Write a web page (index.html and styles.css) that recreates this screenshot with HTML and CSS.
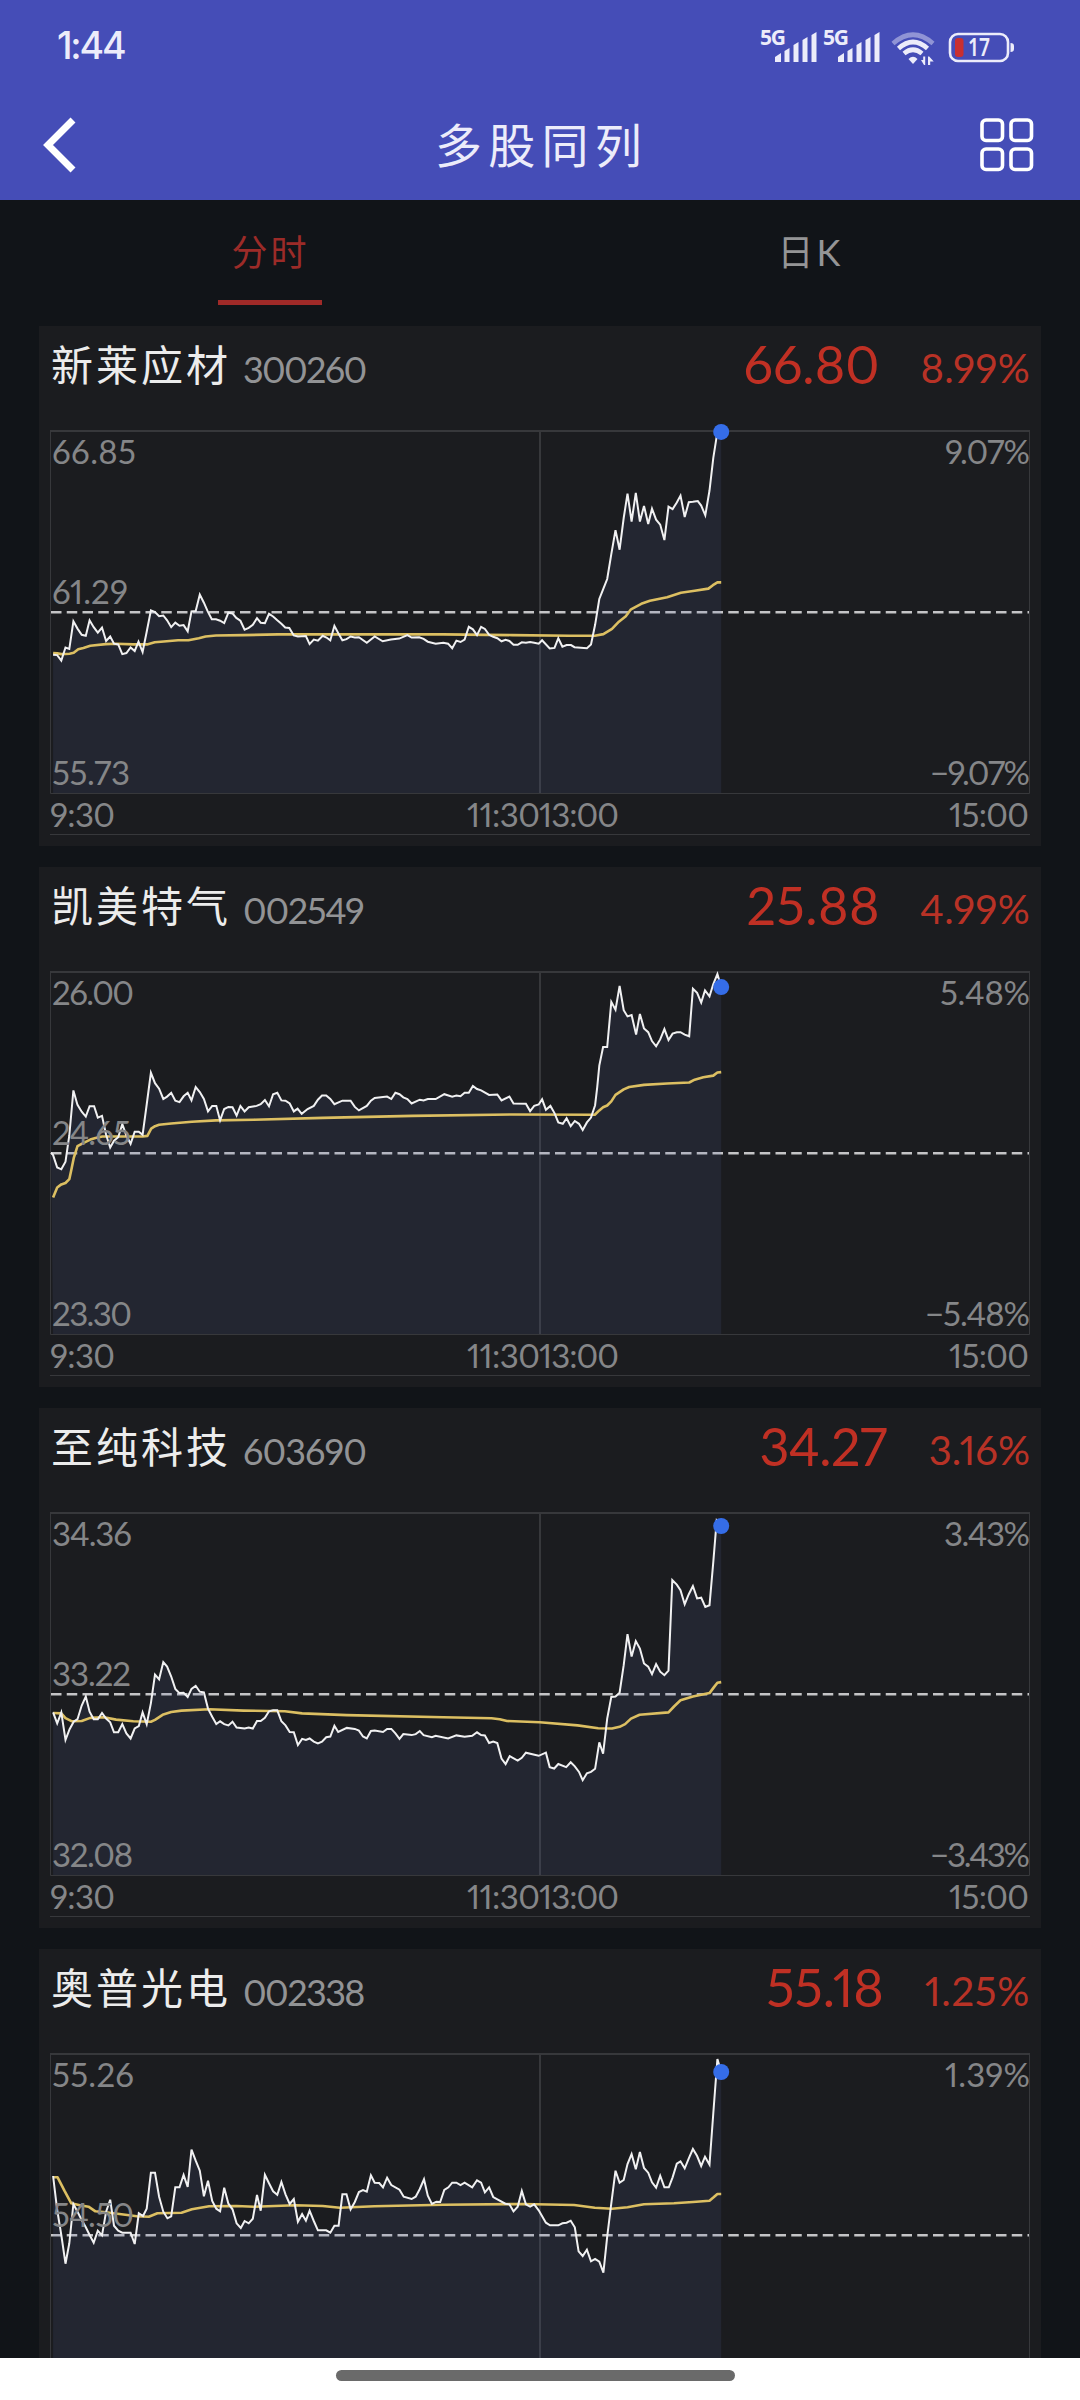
FILE: index.html
```html
<!DOCTYPE html>
<html lang="zh-CN">
<head>
<meta charset="utf-8">
<title>多股同列</title>
<link rel="stylesheet" href="styles.css">
</head>
<body>
<div class="screen">
  <header class="top">
    <div class="status">
      <span class="clock">1:44</span>
      <svg class="status-icons" width="260" height="40" viewBox="0 0 260 40">
        <g id="signal">
          <text class="net" x="0" y="20" textLength="26">5G</text>
          <path d="M15 32l6-4v9h-6zM24.500 26l5-3v14h-5zM33.500 20l5-3v20h-5zM42.500 15l5-3v25h-5zM51.500 10l5-3v30h-5z"/>
        </g>
        <use href="#signal" x="63"/>
        <g fill="none" stroke="#ececfa" stroke-width="4.600">
          <path d="M133 18.500Q153 1 173 18.500" opacity=".45"/>
          <path d="M138.500 23.500Q153 10.500 167.500 23.500"/>
          <path d="M144 28.500Q153 21 162 28.500"/>
        </g>
        <path d="M148.500 34Q153 29.500 157.500 34L153 39z"/>
        <path d="M161 35h2.200v-3.500h2v8.500h-1.200zM168 40v-8.500h1.200l4.500 5h-3.500v3.500z"/>
        <rect x="190" y="9" width="58" height="27" rx="8" fill="none" stroke="#ececfa" stroke-width="2.600"/>
        <rect x="195" y="13" width="8.500" height="19" rx="3" fill="#c92f30"/>
        <path d="M250.500 18q3.500 0 3.500 3v3q0 3-3.500 3z"/>
        <text class="level" x="208" y="31" textLength="22" lengthAdjust="spacingAndGlyphs">17</text>
      </svg>
    </div>
    <div class="nav">
      <svg class="back" width="34" height="56" viewBox="0 0 34 56"><path d="M30 3L5 28L30 53" fill="none" stroke="#fff" stroke-width="7"/></svg>
      <h1>多股同列</h1>
      <svg class="grid" width="54" height="54" viewBox="0 0 54 54" fill="none" stroke="#fff" stroke-width="3.600">
        <rect x="2" y="2" width="20.500" height="20.500" rx="4"/><rect x="31" y="2" width="20.500" height="20.500" rx="4"/>
        <rect x="2" y="31" width="20.500" height="20.500" rx="4"/><rect x="31" y="31" width="20.500" height="20.500" rx="4"/>
      </svg>
    </div>
  </header>
  <nav class="tabs">
    <div class="tab active"><span>分时</span></div>
    <div class="tab"><span>日K</span></div>
  </nav>
  <main class="list">
    <section class="card q1">
      <div class="head"><span class="name">新莱应材</span><span class="code">300260</span><span class="price">66.80</span><span class="change">8.99%</span></div>
      <svg class="plot" width="980" height="406" data-series="0">
        <g class="labels"><text x="2" y="34" textLength="84">66.85</text><text x="2" y="173.500" textLength="76">61.29</text><text x="2" y="354.500" textLength="78">55.73</text>
        <text x="895" y="34" textLength="85">9.07%</text><text x="880" y="354.500" textLength="100">−9.07%</text>
        <text x="0" y="396.500" textLength="65">9:30</text><text x="417" y="396.500" textLength="73">11:30</text><text x="489" y="396.500" textLength="80">13:00</text><text x="899" y="396.500" textLength="80">15:00</text></g>
      </svg>
    </section>
    <section class="card q2">
      <div class="head"><span class="name">凯美特气</span><span class="code">002549</span><span class="price">25.88</span><span class="change">4.99%</span></div>
      <svg class="plot" width="980" height="406" data-series="1">
        <g class="labels"><text x="2" y="34" textLength="82">26.00</text><text x="2" y="173.500" textLength="79">24.65</text><text x="2" y="354.500" textLength="80">23.30</text>
        <text x="890" y="34" textLength="90">5.48%</text><text x="875" y="354.500" textLength="105">−5.48%</text>
        <text x="0" y="396.500" textLength="65">9:30</text><text x="417" y="396.500" textLength="73">11:30</text><text x="489" y="396.500" textLength="80">13:00</text><text x="899" y="396.500" textLength="80">15:00</text></g>
      </svg>
    </section>
    <section class="card q3">
      <div class="head"><span class="name">至纯科技</span><span class="code">603690</span><span class="price">34.27</span><span class="change">3.16%</span></div>
      <svg class="plot" width="980" height="406" data-series="2">
        <g class="labels"><text x="2" y="34" textLength="80">34.36</text><text x="2" y="173.500" textLength="79">33.22</text><text x="2" y="354.500" textLength="81">32.08</text>
        <text x="894" y="34" textLength="86">3.43%</text><text x="880" y="354.500" textLength="100">−3.43%</text>
        <text x="0" y="396.500" textLength="65">9:30</text><text x="417" y="396.500" textLength="73">11:30</text><text x="489" y="396.500" textLength="80">13:00</text><text x="899" y="396.500" textLength="80">15:00</text></g>
      </svg>
    </section>
    <section class="card q4">
      <div class="head"><span class="name">奥普光电</span><span class="code">002338</span><span class="price">55.18</span><span class="change">1.25%</span></div>
      <svg class="plot" width="980" height="406" data-series="3">
        <g class="labels"><text x="2" y="34" textLength="82">55.26</text><text x="2" y="173.500" textLength="82">54.50</text>
        <text x="895" y="34" textLength="85">1.39%</text></g>
      </svg>
    </section>
  </main>
  <footer class="gesture"><div class="handle"></div></footer>
</div>
<script src="charts.js"></script>
</body>
</html>
```
FILE: styles.css
```css
* { box-sizing: border-box; }
body { margin: 0; background: #111418; }
.screen {
  width: 1080px; height: 2400px; overflow: hidden;
  display: flex; flex-direction: column;
  background: #111418; color: #ececec;
  font-family: Lato, "Noto Sans CJK SC", sans-serif;
  font-variant-numeric: proportional-nums;
}
.top { height: 200px; flex: none; background: #454db7; color: #ececfa; }
.status { height: 90px; padding: 0 60px 0 57px; display: flex; justify-content: space-between; align-items: center; }
.clock { padding-top: 1px; font: 500 37.5px/44px Inter, sans-serif; letter-spacing: -2.2px; }
.status-icons { fill: #ececfa; overflow: visible; }
.net { font: 700 21px "Noto Sans", sans-serif; }
.level { font: 600 25px "Noto Sans", sans-serif; }
.nav { height: 110px; padding: 0 46px 0 43px; display: flex; justify-content: space-between; align-items: center; }
.nav svg { margin-bottom: 1px; }
.back { margin-right: 20px; }
h1 { margin: 0; padding-bottom: 5px; font: 400 47px/64px "Noto Sans CJK SC", sans-serif; letter-spacing: 6.3px; text-indent: 6px; }
.tabs { height: 126px; flex: none; display: flex; }
.tab { flex: 1; display: flex; justify-content: center; font-size: 36px; line-height: 104px; color: #949596; letter-spacing: 3px; }
.tab span { width: 104px; height: 105px; padding-left: 1px; text-align: center; }
.tab.active { color: #9c2b28; }
.tab.active span { border-bottom: 5px solid #a02a28; }
.list { flex: 1; min-height: 0; overflow: hidden; padding: 0 39px; display: flex; flex-direction: column; gap: 21px; }
.card { height: 520px; flex: none; padding: 0 11px; background: #1b1c1f; }
.head { height: 104px; padding-top: 5px; display: flex; align-items: baseline; line-height: 60px; }
.name { font-family: "Noto Sans CJK SC", sans-serif; font-size: 42px; letter-spacing: 3px; padding-left: 1px; }
.code { margin-left: 12px; padding-top: 2px; font-size: 36px; color: #929395; transform: translateY(2px); }
.price { margin-left: auto; font-size: 52px; color: #c03024; transform: translateY(3px); }
.change { font-size: 40px; color: #b83226; transform: translateY(2px); }
.q1 .code { letter-spacing: -1.7px; }
.q2 .code { letter-spacing: -1.3px; }
.q3 .code { letter-spacing: -.9px; }
.q4 .code { letter-spacing: -1.6px; }
.q1 .price { letter-spacing: 0; margin-right: 41px; }
.q2 .price { letter-spacing: .5px; margin-right: 40px; }
.q3 .price { letter-spacing: -.6px; margin-right: 42px; }
.q4 .price { letter-spacing: 0; margin-right: 41px; }
.q1 .change, .q2 .change { letter-spacing: .3px; }
.q4 .change { letter-spacing: .7px; }
.plot { display: block; overflow: visible; }
.labels { font-size: 33px; fill: #858688; }
.frame { fill: none; stroke: #37383b; stroke-width: 1; }
.frame.strong { stroke-width: 2; }
.base { stroke: #c4c4c6; stroke-width: 2.6; stroke-dasharray: 10.5 5.25; }
.area { fill: rgba(82, 100, 165, .14); }
.price-line { fill: none; stroke: #f1f1f2; stroke-width: 2; stroke-linejoin: miter; }
.avg-line { fill: none; stroke: #dcbf62; stroke-width: 2.6; stroke-linejoin: round; }
.dot { fill: #356de8; }
.gesture { height: 42px; flex: none; background: #fff; display: flex; justify-content: center; padding-top: 12px; }
.handle { width: 399px; height: 11px; margin-right: 9px; border-radius: 6px; background: #6a6a6a; }
```
FILE: charts.js
```js
// Intraday series: "x,y" pairs on a grid finer than a pixel; kx and ky give grid units per pixel.
const series = [
  { dy: -110, ky: 2.9037,
    price: "67,972 79,973 91,989 103,951 114,955 126,875 138,896 150,914 162,917 173,872 185,892 197,908 209,893 221,932 233,919 244,940 256,942 268,970 280,967 292,951 304,961 315,934 327,964 339,905 351,843 363,848 375,860 387,858 398,872 410,892 422,879 434,888 446,886 458,904 469,846 481,845 493,797 505,821 516,846 528,869 540,869 552,873 564,880 576,850 588,852 599,865 611,873 623,899 635,894 647,885 659,866 670,879 682,880 694,853 706,861 718,872 730,882 741,893 753,894 766,916 778,919 801,918 812,941 824,928 836,931 850,917 861,922 872,930 884,888 896,911 907,930 919,927 931,919 943,922 955,921 978,937 1001,919 1024,933 1048,928 1072,925 1096,915 1108,922 1130,921 1143,926 1155,934 1178,940 1200,937 1214,940 1226,953 1238,931 1250,935 1262,928 1274,891 1286,898 1298,915 1310,891 1321,897 1333,914 1345,920 1357,924 1369,933 1381,929 1392,932 1404,943 1416,943 1428,936 1440,937 1452,935 1464,937 1477,940 1487,930 1509,954 1523,952 1534,924 1546,949 1558,944 1571,944 1581,950 1617,953 1629,942 1641,885 1653,810 1665,780 1676,752 1688,680 1700,610 1712,667 1724,575 1735,504 1747,585 1759,502 1771,585 1783,540 1795,592 1806,548 1818,580 1830,594 1842,639 1854,542 1866,549 1878,530 1889,510 1901,572 1913,529 1925,528 1939,526 1949,539 1961,567 1973,495 1984,400 1996,325 2007,325",
    avg: "67,967 79,968 91,970 115,969 127,966 140,956 155,952 175,946 220,941 250,940 300,942 340,942 362,936 380,934 430,930 460,930 490,924 510,919 540,916 620,915 720,913 1200,913 1400,915 1568,917 1640,917 1665,912 1690,897 1710,876 1730,860 1745,840 1775,824 1800,815 1850,805 1890,792 1930,786 1970,780 1983,770 1996,762 2007,762" },
  { dy: -111, ky: 2.9037,
    price: "61,850 67,857 79,893 91,898 103,876 114,800 126,669 138,711 150,731 162,745 173,715 186,715 197,748 209,743 221,798 233,835 244,815 256,805 268,767 280,800 292,824 304,789 316,789 327,798 339,710 351,618 363,648 375,664 387,694 398,687 410,676 422,699 434,703 446,686 458,676 469,698 481,659 493,674 505,694 517,730 529,714 541,714 552,756 564,723 576,717 588,718 600,742 611,714 623,730 635,718 658,714 670,709 682,697 694,715 706,680 718,676 730,698 742,699 754,707 766,730 777,722 789,737 806,723 824,714 836,696 848,684 860,684 872,694 884,709 907,699 931,699 943,717 955,727 978,714 990,699 1001,691 1037,687 1049,694 1061,676 1073,680 1084,689 1096,694 1108,707 1132,696 1143,698 1155,694 1178,694 1203,680 1226,687 1238,684 1250,686 1262,676 1274,676 1286,656 1298,665 1310,669 1333,682 1357,681 1369,698 1392,687 1404,707 1440,708 1452,729 1464,714 1477,710 1487,695 1498,725 1511,714 1523,735 1534,762 1547,766 1558,750 1570,773 1582,758 1594,766 1605,784 1617,762 1629,748 1641,712 1647,660 1653,597 1664,543 1676,543 1688,412 1700,435 1712,366 1724,436 1735,454 1747,450 1760,507 1771,447 1783,489 1795,500 1806,526 1818,541 1830,521 1842,491 1854,523 1866,504 1878,500 1889,500 1901,507 1914,512 1925,374 1937,386 1949,414 1960,379 1973,396 1984,360 1996,331 2007,369",
    avg: "67,980 79,951 91,942 103,938 114,927 120,900 127,866 138,831 150,824 175,812 190,807 210,803 327,803 341,801 352,780 363,773 375,769 410,765 470,760 540,756 650,754 850,749 1110,743 1400,739 1640,740 1653,727 1664,718 1676,713 1688,701 1700,682 1724,666 1740,659 1783,653 1850,649 1914,646 1930,638 1955,631 1984,626 1996,617 2007,616" },
  { dy: -112, ky: 2.9037,
    price: "67,907 79,939 91,907 103,987 115,956 127,934 138,927 150,887 162,861 173,905 185,927 197,927 209,909 221,925 233,936 244,965 256,965 268,941 280,968 292,983 304,954 316,947 327,907 339,941 351,880 363,797 375,811 387,761 398,774 410,803 422,839 434,851 446,850 458,862 469,839 481,830 493,847 505,849 517,896 529,920 541,941 552,933 564,941 576,945 588,934 600,951 623,954 635,951 647,954 659,932 670,932 682,923 694,904 706,901 718,901 730,933 742,945 754,964 766,965 778,1002 790,984 801,987 812,983 824,992 836,997 848,992 860,979 872,977 884,946 895,964 920,952 943,955 955,960 967,977 978,983 990,961 1001,960 1025,964 1037,955 1049,955 1061,968 1073,984 1084,970 1108,973 1120,970 1132,961 1143,973 1167,979 1178,975 1214,983 1238,974 1262,978 1284,975 1298,965 1310,973 1321,974 1333,996 1345,992 1357,996 1369,1041 1381,1057 1393,1034 1416,1047 1428,1039 1440,1024 1465,1030 1477,1033 1498,1024 1509,1066 1522,1070 1534,1057 1557,1066 1570,1052 1582,1064 1594,1080 1605,1104 1617,1084 1629,1080 1641,1071 1653,994 1664,1027 1676,925 1688,862 1700,861 1712,850 1724,770 1735,680 1747,745 1759,700 1771,722 1783,765 1795,774 1806,796 1818,767 1830,789 1842,799 1854,786 1865,523 1878,536 1889,552 1901,593 1913,564 1925,540 1937,576 1949,574 1961,601 1973,596 1984,470 1994,350 2007,366",
    avg: "67,909 91,910 103,924 122,933 150,932 175,923 215,921 250,928 300,933 351,934 363,929 385,914 410,906 440,902 520,898 620,902 740,904 790,910 920,915 1200,921 1340,924 1364,927 1385,932 1480,936 1590,945 1650,953 1690,954 1712,949 1728,941 1745,925 1770,914 1854,907 1870,890 1889,872 1925,861 1973,851 1985,835 1996,821 2007,819" },
  { dy: -113, ky: 3,
    price: "67,708 79,810 91,885 103,971 114,910 126,792 138,815 150,840 162,862 173,885 185,908 197,872 209,886 221,815 233,779 244,857 256,872 268,878 292,878 304,912 316,820 328,828 339,806 351,698 363,698 375,770 387,815 399,835 410,829 422,742 434,742 446,705 458,741 469,629 481,662 493,692 505,769 517,722 529,783 541,806 552,814 564,743 576,791 588,808 600,850 612,864 623,843 635,850 647,836 659,765 670,812 682,704 694,730 706,754 718,764 730,726 742,763 754,792 766,777 778,845 790,822 801,842 812,812 824,843 836,871 860,871 872,878 884,857 896,857 907,763 919,763 931,808 943,786 955,756 967,750 978,755 990,706 1001,728 1014,729 1025,742 1037,713 1049,735 1073,749 1085,770 1108,777 1120,770 1132,747 1144,718 1155,767 1167,792 1180,785 1191,786 1203,750 1215,742 1226,728 1238,728 1250,735 1262,728 1284,742 1298,721 1310,728 1321,757 1333,742 1345,771 1380,791 1392,793 1404,814 1416,800 1428,753 1440,793 1452,800 1464,793 1477,811 1498,848 1510,856 1534,856 1546,850 1558,848 1570,842 1582,862 1593,934 1605,948 1617,929 1629,964 1641,957 1653,965 1665,998 1676,890 1688,790 1700,692 1712,728 1724,720 1735,672 1747,642 1759,688 1771,636 1783,684 1795,698 1806,727 1818,743 1830,707 1842,742 1855,742 1866,712 1878,671 1889,664 1901,685 1913,655 1925,627 1937,648 1949,678 1960,650 1973,674 1984,520 1996,357 2007,396",
    avg: "67,712 80,712 100,752 120,790 145,796 170,800 190,814 220,817 260,822 310,829 345,830 370,820 440,818 470,808 520,799 600,798 650,800 770,796 850,798 900,803 1000,799 1200,794 1430,792 1580,795 1640,803 1690,806 1735,802 1783,793 1870,790 1925,786 1973,782 1985,772 1996,762 2007,762" }
];
const kx = 2.9037, bottom = 363;

function toPixels(text, s) {
  return text.split(" ").map(pair => {
    const [x, y] = pair.split(",").map(Number);
    return [(x / kx - 20).toFixed(1), (y / s.ky + s.dy).toFixed(1)];
  });
}

document.querySelectorAll(".plot").forEach(svg => {
  const s = series[svg.dataset.series];
  const price = toPixels(s.price, s), avg = toPixels(s.avg, s);
  const [ex, ey] = price[price.length - 1];
  svg.insertAdjacentHTML("afterbegin", `
    <path class="frame strong" d="M0 1H980M490 1V363"/>
    <path class="frame" d="M.5 0V363.500H979.500V0M0 404.500H980"/>
    <path class="base" d="M1 182.300H979"/>
    <polygon class="area" points="3.100,${bottom} ${price.join(" ")} ${ex},${bottom}"/>
    <polyline class="avg-line" points="${avg.join(" ")}"/>
    <polyline class="price-line" points="${price.join(" ")}"/>
    <circle class="dot" cx="${ex}" cy="${ey}" r="8"/>`);
});
```
